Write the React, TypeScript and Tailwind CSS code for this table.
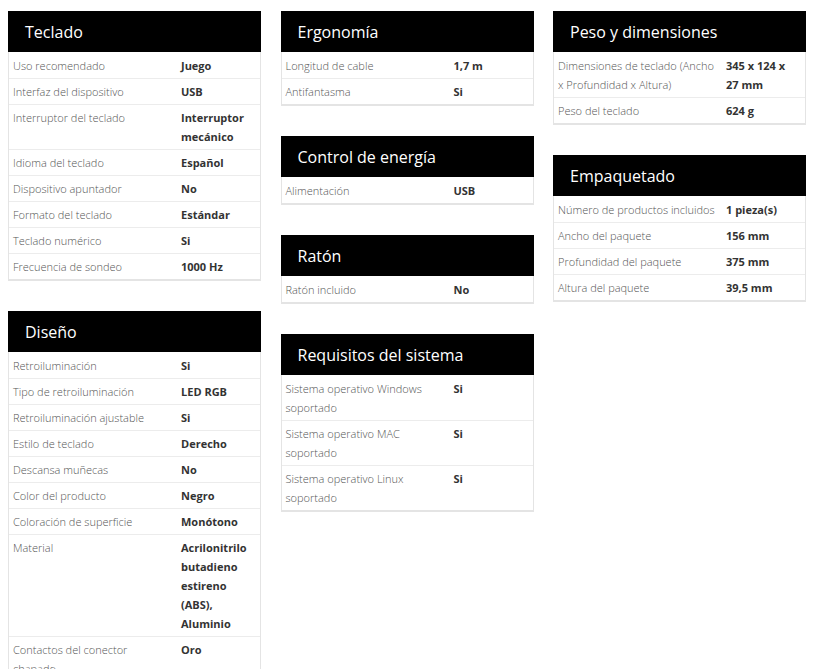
import React from 'react';

type Row = [string, string];
type Section = { title: string; rows: Row[] };

const columns: Section[][] = [
  [
    {
      title: 'Teclado',
      rows: [
        ['Uso recomendado', 'Juego'],
        ['Interfaz del dispositivo', 'USB'],
        ['Interruptor del teclado', 'Interruptor mecánico'],
        ['Idioma del teclado', 'Español'],
        ['Dispositivo apuntador', 'No'],
        ['Formato del teclado', 'Estándar'],
        ['Teclado numérico', 'Si'],
        ['Frecuencia de sondeo', '1000 Hz'],
      ],
    },
    {
      title: 'Diseño',
      rows: [
        ['Retroiluminación', 'Si'],
        ['Tipo de retroiluminación', 'LED RGB'],
        ['Retroiluminación ajustable', 'Si'],
        ['Estilo de teclado', 'Derecho'],
        ['Descansa muñecas', 'No'],
        ['Color del producto', 'Negro'],
        ['Coloración de superficie', 'Monótono'],
        ['Material', 'Acrilonitrilo butadieno estireno (ABS), Aluminio'],
        ['Contactos del conector chapado', 'Oro'],
      ],
    },
  ],
  [
    {
      title: 'Ergonomía',
      rows: [
        ['Longitud de cable', '1,7 m'],
        ['Antifantasma', 'Si'],
      ],
    },
    { title: 'Control de energía', rows: [['Alimentación', 'USB']] },
    { title: 'Ratón', rows: [['Ratón incluido', 'No']] },
    {
      title: 'Requisitos del sistema',
      rows: [
        ['Sistema operativo Windows soportado', 'Si'],
        ['Sistema operativo MAC soportado', 'Si'],
        ['Sistema operativo Linux soportado', 'Si'],
      ],
    },
  ],
  [
    {
      title: 'Peso y dimensiones',
      rows: [
        ['Dimensiones de teclado (Ancho x Profundidad x Altura)', '345 x 124 x 27 mm'],
        ['Peso del teclado', '624 g'],
      ],
    },
    {
      title: 'Empaquetado',
      rows: [
        ['Número de productos incluidos', '1 pieza(s)'],
        ['Ancho del paquete', '156 mm'],
        ['Profundidad del paquete', '375 mm'],
        ['Altura del paquete', '39,5 mm'],
      ],
    },
  ],
];

function SpecCard({ section }: { section: Section }) {
  return (
    <div className="border border-[#e4e4e4] border-b-2 bg-white">
      <div className="h-[41px] bg-black flex items-center pl-[17px] -mx-px -mt-px">
        <h3 className="text-white text-[16px] font-normal leading-none">{section.title}</h3>
      </div>
      {section.rows.map(([label, value], i) => (
        <div
          key={label}
          className={`grid grid-cols-[172px_1fr] text-[11px] leading-[19px] py-[3px] border-t ${
            i > 0 ? 'border-[#ececec]' : 'border-transparent'
          }`}
        >
          <div className="pl-[4px] pr-[11px] text-[#555] font-light">{label}</div>
          <div className="pr-[6px] text-[#333] font-bold">{value}</div>
        </div>
      ))}
    </div>
  );
}

export default function App() {
  return (
    <div
      className="min-h-screen bg-white px-[8px] pt-[11px] flex gap-[19.5px] items-start"
      style={{ fontFamily: '"Open Sans", "Noto Sans", sans-serif' }}
    >
      {columns.map((col, ci) => (
        <div key={ci} className="w-[253px] flex flex-col gap-[30px] shrink-0">
          {col.map((s) => (
            <SpecCard key={s.title} section={s} />
          ))}
        </div>
      ))}
    </div>
  );
}
